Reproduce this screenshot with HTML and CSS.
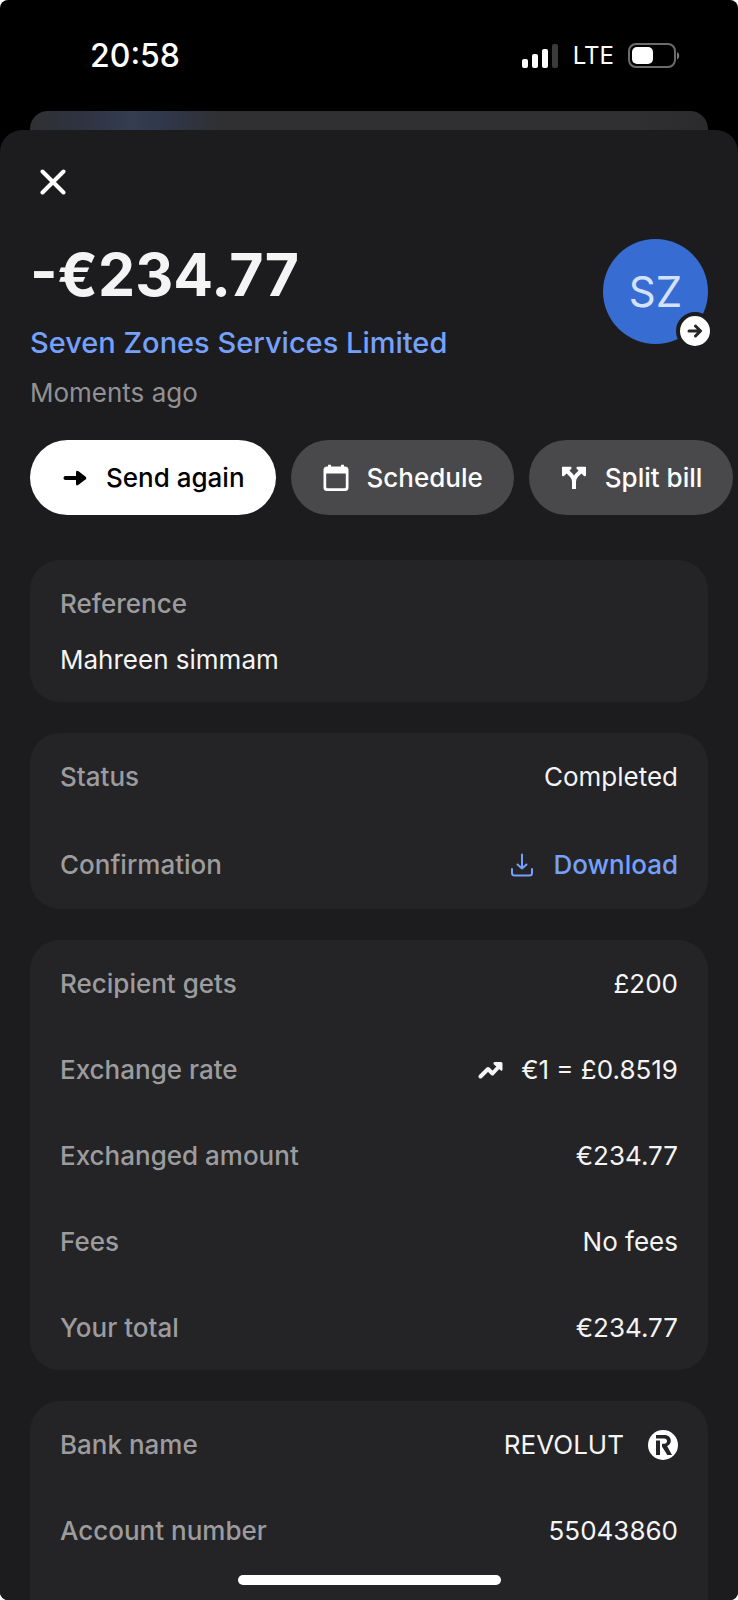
FILE: index.html
```html
<!DOCTYPE html>
<html lang="en">
<head>
<meta charset="utf-8">
<meta name="viewport" content="width=device-width, initial-scale=1">
<title>Transaction details</title>
<link rel="stylesheet" href="styles.css">
</head>
<body>
<div class="phone">
  <header class="status-bar">
    <time class="clock">20:58</time>
    <div class="status-icons">
      <svg class="signal" viewBox="0 0 37 24" aria-hidden="true">
        <rect x="0" y="15" width="6" height="9" rx="2"/>
        <rect x="10" y="10" width="6" height="14" rx="2"/>
        <rect x="20" y="5" width="6" height="19" rx="2"/>
        <rect class="dim" x="30" y="0" width="6" height="24" rx="2"/>
      </svg>
      <span class="network">LTE</span>
      <svg class="battery" viewBox="0 0 52 26" aria-hidden="true">
        <rect class="shell" x="1" y="1" width="46" height="23" rx="7"/>
        <rect x="4" y="4" width="21" height="17" rx="5"/>
        <path class="tip" d="M49 9c3 1.500 3 6 0 7.500z"/>
      </svg>
    </div>
  </header>
  <div class="back-sheet"></div>
  <main class="sheet">
    <button class="close" type="button" aria-label="Close">
      <svg viewBox="0 0 26 26" aria-hidden="true"><path d="M2.500 2.500l21 21M23.500 2.500l-21 21"/></svg>
    </button>
    <section class="summary">
      <div class="summary-text">
        <h1 class="amount">-€234.77</h1>
        <a class="payee" href="#payee">Seven Zones Services Limited</a>
        <p class="when">Moments ago</p>
      </div>
      <div class="avatar">
        <span>SZ</span>
        <div class="badge">
          <svg viewBox="0 0 16 14" aria-hidden="true"><path d="M2 7h11M8.500 2l5 5-5 5"/></svg>
        </div>
      </div>
    </section>
    <div class="actions">
      <button class="pill pill-primary" type="button">
        <svg viewBox="0 0 28 28" aria-hidden="true"><path class="line" d="M4.500 14H17"/><path d="M15 8.500q0-3 2.500-1.200l7.200 5.500q1.500 1.200 0 2.400l-7.200 5.500q-2.500 1.800-2.500-1.200z"/></svg>
        Send again
      </button>
      <button class="pill" type="button">
        <svg viewBox="0 0 28 28" aria-hidden="true"><path fill-rule="evenodd" d="M6 .8h3v1.700h10V.8h3v1.700h1A3.500 3.500 0 0 1 26.500 6v17.500A3.500 3.500 0 0 1 23 27H5a3.500 3.500 0 0 1-3.500-3.500V6A3.500 3.500 0 0 1 5 2.500h1zM4.200 9.500v13.300a1.500 1.500 0 0 0 1.500 1.500h16.600a1.500 1.500 0 0 0 1.500-1.500V9.500z"/></svg>
        Schedule
      </button>
      <button class="pill" type="button">
        <svg viewBox="0 0 28 28" aria-hidden="true"><path d="M2.200 2.700h8.300q1.900.3.800 2L4 12q-1.700 1-2-.8V3.500zM25.800 2.700h-8.300q-1.900.3-.8 2L24 12q1.700 1 2-.8V3.500z"/><path class="line butt" d="M7 7l4.500 4.500q2.500 2.500 2.500 6V25M21 7l-4.500 4.500q-2.500 2.500-2.500 6"/></svg>
        Split bill
      </button>
    </div>
    <dl class="card note">
      <dt>Reference</dt>
      <dd>Mahreen simmam</dd>
    </dl>
    <dl class="card roomy">
      <div class="row"><dt>Status</dt><dd>Completed</dd></div>
      <div class="row"><dt>Confirmation</dt><dd><a class="download" href="#download"><svg class="icon-small" viewBox="0 0 24 24" aria-hidden="true"><path d="M12 1.500v14M7.500 11.500l4.500 4 4.500-4M2 16v4q0 2.500 2.500 2.500h15q2.500 0 2.500-2.500v-4"/></svg>Download</a></dd></div>
    </dl>
    <dl class="card">
      <div class="row"><dt>Recipient gets</dt><dd>£200</dd></div>
      <div class="row"><dt>Exchange rate</dt><dd class="rate"><svg class="trend" viewBox="0 0 26 18" aria-hidden="true"><path class="line" d="M2.500 15.500l7.500-7.500 4.500 4.500 6-6.500"/><path d="M16.500 1H23q1.500 0 1.500 1.500v6.300q-.5 1.600-2 .4l-6.800-6q-1-1.600.8-2.200z"/></svg>€1 = £0.8519</dd></div>
      <div class="row"><dt>Exchanged amount</dt><dd>€234.77</dd></div>
      <div class="row"><dt>Fees</dt><dd>No fees</dd></div>
      <div class="row"><dt>Your total</dt><dd>€234.77</dd></div>
    </dl>
    <dl class="card card-last">
      <div class="row"><dt>Bank name</dt><dd class="bank">REVOLUT<svg class="bank-logo" viewBox="0 0 30 30" aria-hidden="true"><circle cx="15" cy="15" r="15"/><path class="mark" d="M8 10.500h4V25H8z"/><path class="mark" d="M8 5h8.500c3.800 0 6.300 2.300 6.300 5.700 0 2.600-1.500 4.500-3.700 5.300L24 25h-4.700l-5.300-8.500v-2.700h2.300c1.700 0 2.700-1.100 2.700-2.700s-1-2.700-2.700-2.700H8z"/></svg></dd></div>
      <div class="row"><dt>Account number</dt><dd>55043860</dd></div>
    </dl>
  </main>
  <div class="home-indicator"></div>
</div>
</body>
</html>
```
FILE: styles.css
```css
* { box-sizing: border-box; }

body {
  margin: 0;
  background: #fff;
  color: #f4f4f5;
  font: 400 26px/36px Inter, "Liberation Sans", sans-serif;
}

h1, p, dl, dd { margin: 0; }
a { color: #75a1fc; text-decoration: none; }
button { border: 0; padding: 0; font: inherit; color: #fff; cursor: pointer; }
svg { display: block; flex: none; fill: currentColor; }

.line { fill: none; stroke: currentColor; stroke-width: 4; stroke-linecap: round; stroke-linejoin: round; }
.butt { stroke-linecap: butt; }

.phone {
  position: relative;
  display: flex;
  flex-direction: column;
  min-height: 100vh;
  overflow: hidden;
  background: #000;
  border-radius: 8px;
}

.status-bar {
  display: flex;
  justify-content: space-between;
  align-items: center;
  height: 111px;
  padding: 0 58px 0 90px;
  color: #fff;
}
.clock { font-size: 32px; font-weight: 500; }
.status-icons { display: flex; align-items: center; gap: 14px; }
.signal { width: 37px; height: 24px; }
.dim { fill: #3b3b3b; }
.network { font-size: 24px; font-weight: 400; }
.battery { width: 52px; height: 26px; }
.shell { fill: none; stroke: #6b6b6b; stroke-width: 2; }
.tip { fill: #7b7b7b; }

.back-sheet {
  height: 38px;
  margin: 0 30px -19px;
  border-radius: 18px 18px 0 0;
  background: linear-gradient(90deg, #303033 0, #2f3342 8%, #333e50 15%, #30374a 20%, #303033 28%, #303032 88%, #2b2b2d 100%);
}

.sheet {
  position: relative;
  flex: 1;
  display: flex;
  flex-direction: column;
  padding: 33px 30px 0;
  border-radius: 22px 22px 0 0;
  background: #1c1c1e;
}

.close {
  width: 46px;
  padding: 6px 10px;
  background: none;
}
.close svg { width: 26px; height: 26px; fill: none; stroke: #fff; stroke-width: 4; stroke-linecap: round; }

.summary { display: flex; justify-content: space-between; margin-top: 38px; }
.amount { font-size: 59px; line-height: 72px; font-weight: 700; }
.payee { display: block; margin-top: 12px; font-size: 29px; line-height: 40px; font-weight: 500; }
.when { margin-top: 12px; color: #919194; }

.avatar {
  position: relative;
  display: grid;
  place-items: center;
  width: 105px;
  height: 105px;
  border-radius: 50%;
  background: #376cd3;
  color: #d5e1fb;
  font-size: 42px;
}
.badge {
  position: absolute;
  right: -6px;
  bottom: -6px;
  display: grid;
  place-items: center;
  width: 38px;
  height: 38px;
  border: 4px solid #1c1c1e;
  border-radius: 50%;
  background: #fff;
}
.badge svg { width: 16px; height: 14px; fill: none; stroke: #262628; stroke-width: 3; stroke-linecap: round; stroke-linejoin: round; }

.actions { display: flex; gap: 15px; margin: 29px -30px 45px 0; }
.pill {
  display: flex;
  align-items: center;
  gap: 17px;
  padding: 20px 31px;
  border-radius: 38px;
  background: #49494b;
  font-weight: 500;
  line-height: 35px;
  white-space: nowrap;
}
.pill svg { width: 28px; height: 28px; }
.pill-primary { background: #fff; color: #000; }

.card {
  margin-bottom: 31px;
  padding: 0 30px;
  border-radius: 30px;
  background: #242426;
}
.card dt { color: #9c9c9f; font-weight: 500; }
.note { display: grid; gap: 20px; padding: 26px 30px 24px; }
.row { display: flex; justify-content: space-between; align-items: center; height: 86px; padding-top: 2px; }
.roomy .row { height: 88px; padding-top: 0; }
.card-last { flex: 1; margin-bottom: 0; border-radius: 30px 30px 0 0; }

.download, .rate, .bank { display: flex; align-items: center; }
.download { gap: 19px; font-weight: 500; }
.icon-small { width: 24px; height: 24px; fill: none; stroke: currentColor; stroke-width: 2; stroke-linecap: round; stroke-linejoin: round; }
.rate { gap: 17px; }
.trend { width: 26px; height: 18px; }
.bank { gap: 24px; }
.bank-logo { width: 30px; height: 30px; fill: #fff; }
.mark { fill: #242426; }

.home-indicator {
  position: absolute;
  left: 50%;
  bottom: 15px;
  width: 263px;
  height: 10px;
  margin-left: -131px;
  border-radius: 5px;
  background: #fff;
}
```
